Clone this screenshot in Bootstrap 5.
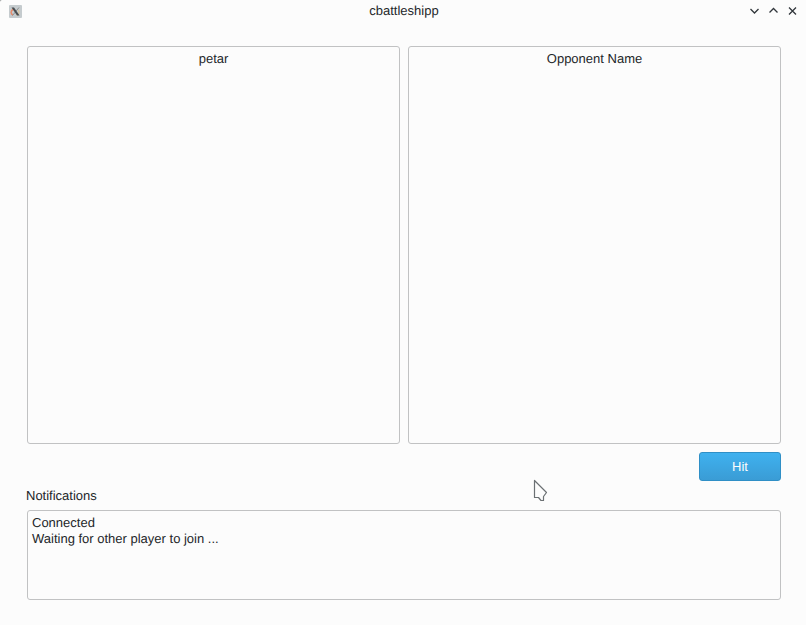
<!DOCTYPE html>
<html lang="en">
<head>
<meta charset="utf-8">
<meta name="viewport" content="width=device-width, initial-scale=1">
<title>cbattleshipp</title>
<link href="https://cdn.jsdelivr.net/npm/bootstrap@5.3.0/dist/css/bootstrap.min.css" rel="stylesheet">
<style>
html { background: #8c8e8f; }
body { font: 13px/16px "Liberation Sans", Arial, sans-serif; color: #232629; background: transparent; text-rendering: geometricPrecision; }
.app-window { background: #fcfcfc; border-top-left-radius: 2px; }
.titlebar { display: grid; grid-template-columns: 1fr auto 1fr; align-items: center; height: 22px; padding: 0 7px 0 9px; }
.titlebar h1 { font-size: 13px; line-height: 16px; }
.win-buttons { gap: 6px; }
.win-btn { width: 13px; height: 13px; color: #31363b; }
.content { padding: 24px 25px 25px 26px; }
.boards { gap: 8px; }
.pane { border: 1px solid #c1c2c3; border-radius: 3px; background: #fcfcfc; }
.inset { margin-left: 1px; }
.pane h2 { font-size: 13px; line-height: 16px; padding-top: 4px; }
.hit-btn { width: 82px; height: 29px; padding: 0; font-size: 13px; line-height: 16px; color: #fcfcfc; border: 1px solid #2f8fc6; border-radius: 3px; background: linear-gradient(#3fb1ef, #3a9cd5); }
.hit-btn:hover { color: #fcfcfc; border-color: #2f8fc6; }
.log-label { margin: 7px 0 6px; }
.log { height: 90px; padding: 4px; color: #232629; resize: none; outline: 0; text-rendering: inherit; }
.pointer { left: 533px; top: 479px; pointer-events: none; }
</style>
<script defer src="https://cdn.jsdelivr.net/npm/bootstrap@5.3.0/dist/js/bootstrap.bundle.min.js"></script>
</head>
<body>
<div class="app-window d-flex flex-column min-vh-100">
  <header class="titlebar">
    <svg width="13" height="13" viewBox="0 0 13 13" aria-hidden="true">
      <rect width="13" height="13" rx="1" fill="#c5cbce"/>
      <path d="M4 4.500C1.500 6 1.500 9 4 10" fill="none" stroke="#e58b6c" stroke-width="1.500"/>
      <path d="M7 10C10 10 11 7 9 5" fill="none" stroke="#d8c5a0" stroke-width="1.300"/>
      <path d="M10 2.500 3.500 10.500" stroke="#8c8f91" stroke-width="1"/>
      <path d="M2.500 2.500H5L10.500 10.500H8Z" fill="#484b4e"/>
    </svg>
    <h1 class="m-0 fw-normal">cbattleshipp</h1>
    <div class="win-buttons d-flex justify-content-end">
      <button type="button" class="win-btn btn border-0 p-0 d-flex" aria-label="Minimize"><svg width="13" height="13" viewBox="0 0 13 13"><path d="m2.500 4 4 4 4-4" fill="none" stroke="currentColor" stroke-width="1.300"/></svg></button>
      <button type="button" class="win-btn btn border-0 p-0 d-flex" aria-label="Maximize"><svg width="13" height="13" viewBox="0 0 13 13"><path d="m2.500 7.500 4-4 4 4" fill="none" stroke="currentColor" stroke-width="1.300"/></svg></button>
      <button type="button" class="win-btn btn border-0 p-0 d-flex" aria-label="Close"><svg width="13" height="13" viewBox="0 0 13 13"><path d="m3 2.500 7 7M10 2.500l-7 7" fill="none" stroke="currentColor" stroke-width="1.300"/></svg></button>
    </div>
  </header>
  <main class="content flex-grow-1 d-flex flex-column">
    <div class="boards inset d-flex flex-grow-1">
      <section class="pane flex-fill w-50 text-center"><h2 class="m-0 fw-normal">petar</h2></section>
      <section class="pane flex-fill w-50 text-center"><h2 class="m-0 fw-normal">Opponent Name</h2></section>
    </div>
    <div class="d-flex justify-content-end pt-2"><button type="button" class="btn hit-btn">Hit</button></div>
    <label for="log" class="log-label">Notifications</label>
    <textarea id="log" class="pane log inset" readonly>Connected
Waiting for other player to join ...</textarea>
  </main>
</div>
<svg class="pointer position-absolute" width="16" height="24" viewBox="0 0 16 24" aria-hidden="true">
  <path d="M1.500 1.500V18.500H5.500L8 21.500H10.500V17.500L13.500 13.500Z" fill="#fcfcfc" stroke="#6b7073" stroke-width="1.200" stroke-linejoin="round"/>
</svg>
</body>
</html>
